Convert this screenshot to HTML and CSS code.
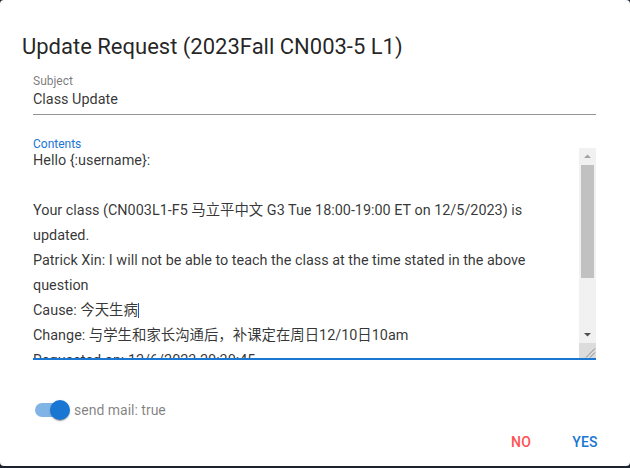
FILE: index.html
```html
<!DOCTYPE html>
<html lang="en">
<head>
<meta charset="utf-8">
<title>Update Request</title>
<link rel="stylesheet" href="styles.css">
</head>
<body>
<div class="dialog">
  <h2 class="title">Update Request (2023Fall CN003-5 L1)</h2>
  <div class="field">
    <div class="label">Subject</div>
    <div class="input">Class Update</div>
  </div>
  <div class="field field-focused">
    <div class="label label-focused">Contents</div>
    <div class="textarea">
      <div class="text">
        <div class="ln">Hello {:username}:</div>
        <div class="ln">&nbsp;</div>
        <div class="ln">Your class (CN003L1-F5 马立平中文 G3 Tue 18:00-19:00 ET on 12/5/2023) is updated.</div>
        <div class="ln">Patrick Xin: I will not be able to teach the class at the time stated in the above question</div>
        <div class="ln">Cause: 今天生病<span class="caret"></span></div>
        <div class="ln">Change: 与学生和家长沟通后，补课定在周日12/10日10am</div>
        <div class="ln">Requested on: 12/6/2023 20:30:45</div>
        <div class="ln">&nbsp;</div>
        <div class="ln">&nbsp;</div>
        <div class="ln">&nbsp;</div>
      </div>
      <div class="scrollbar">
        <div class="sb-btn">
          <svg width="17" height="17" viewBox="0 0 17 17"><path d="M5 10h7L8.5 6.5z" fill="#a3a3a3"/></svg>
        </div>
        <div class="sb-track"><div class="sb-thumb"></div></div>
        <div class="sb-btn">
          <svg width="17" height="17" viewBox="0 0 17 17"><path d="M5 7h7L8.5 10.5z" fill="#505050"/></svg>
        </div>
        <div class="sb-corner">
          <svg width="17" height="15" viewBox="0 0 17 15"><path d="M7 14.5L16 5.5M11 14.5L16 9.5" stroke="#8a8a8a" stroke-width="1"/></svg>
        </div>
      </div>
    </div>
  </div>
  <div class="switch-row">
    <span class="switch">
      <span class="track"></span>
      <span class="thumb"></span>
    </span>
    <span class="switch-label">send mail: true</span>
  </div>
  <div class="actions">
    <button class="btn btn-no">No</button>
    <button class="btn btn-yes">Yes</button>
  </div>
</div>
</body>
</html>
```
FILE: styles.css
```css
html, body {
  margin: 0;
  padding: 0;
}
body {
  background: #1e2330;
  width: 630px;
  height: 468px;
  overflow: hidden;
  font-family: Roboto, "Noto Sans CJK SC", sans-serif;
}
.dialog {
  background: #fff;
  width: 630px;
  height: 466px;
  border-radius: 4px;
  box-sizing: border-box;
  display: flex;
  flex-direction: column;
  padding-top: 31px;
}
.title {
  margin: 0 0 0 22px;
  font-size: 22px;
  font-weight: 400;
  line-height: 32px;
  color: rgba(0, 0, 0, 0.87);
}
.field {
  margin: 10px 34px 0 33px;
  display: flex;
  flex-direction: column;
}
.label {
  font-size: 12px;
  line-height: 16px;
  color: rgba(0, 0, 0, 0.54);
}
.input {
  margin-top: 1px;
  font-size: 14.4px;
  line-height: 20px;
  padding-bottom: 4px;
  color: rgba(0, 0, 0, 0.8);
  border-bottom: 1px solid rgba(0, 0, 0, 0.42);
}
.field-focused {
  margin-top: 23px;
}
.label-focused {
  color: #1976d2;
  line-height: 12px;
  margin-bottom: -2px;
}
.textarea {
  height: 210px;
  display: flex;
  border-bottom: 2px solid #1976d2;
}
.text {
  flex: 1;
  overflow: hidden;
  padding-right: 4px;
  font-size: 14.4px;
  line-height: 25px;
  color: rgba(0, 0, 0, 0.8);
}
.scrollbar {
  width: 17px;
  display: flex;
  flex-direction: column;
  background: #f1f1f1;
}
.sb-btn {
  height: 17px;
}
.sb-btn svg,
.sb-corner svg {
  display: block;
}
.sb-track {
  height: 161px;
  padding: 0 2px;
}
.sb-thumb {
  height: 113px;
  background: #c1c1c1;
}
.sb-corner {
  height: 15px;
  background: #dcdcdc;
}
.caret {
  display: inline-block;
  width: 0;
  height: 15px;
  border-right: 1px solid #2457b0;
  vertical-align: -3px;
}
.switch-row {
  margin: 36px 0 0 35px;
  height: 28px;
  display: flex;
  align-items: center;
}
.switch {
  position: relative;
  width: 35px;
  height: 20px;
  display: flex;
  align-items: center;
}
.track {
  width: 34px;
  height: 14px;
  border-radius: 7px;
  background: #1976d2;
  opacity: 0.55;
}
.thumb {
  position: absolute;
  left: 15px;
  top: 0;
  width: 20px;
  height: 20px;
  border-radius: 50%;
  background: #1976d2;
  box-shadow: 0 2px 1px -1px rgba(0,0,0,0.2), 0 1px 1px 0 rgba(0,0,0,0.14), 0 1px 3px 0 rgba(0,0,0,0.12);
}
.switch-label {
  margin-left: 4px;
  font-size: 14px;
  color: rgba(0, 0, 0, 0.5);
}
.actions {
  display: flex;
  justify-content: flex-end;
  padding-right: 13px;
}
.btn {
  min-width: 64px;
  height: 36px;
  padding: 6px 8px;
  border: 0;
  background: transparent;
  font-family: Roboto, sans-serif;
  font-size: 14px;
  font-weight: 500;
  letter-spacing: 0.2px;
  text-transform: uppercase;
}
.btn-no {
  color: #ff5252;
}
.btn-yes {
  color: #1976d2;
}
```
